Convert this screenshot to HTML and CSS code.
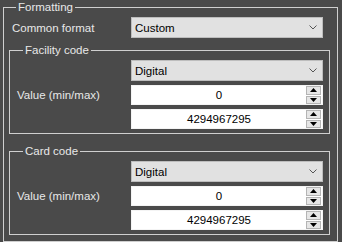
FILE: index.html
```html
<!DOCTYPE html>
<html lang="en">
<head>
    <meta charset="UTF-8">
    <title>Formatting</title>
    <link rel="stylesheet" href="styles.css">
</head>
<body>
    <fieldset class="group outer">
        <legend>Formatting</legend>
        <div class="format-row">
            <label class="caption">Common format</label>
            <div class="combo">
                <span>Custom</span>
                <svg class="chevron" width="8" height="5" viewBox="0 0 8 5"><path d="M0.5 0.5 L4 4 L7.5 0.5" fill="none" stroke="#555" stroke-width="1"/></svg>
            </div>
        </div>

        <fieldset class="group inner">
            <legend>Facility code</legend>
            <div class="field-grid">
                <span></span>
                <div class="combo">
                    <span>Digital</span>
                    <svg class="chevron" width="8" height="5" viewBox="0 0 8 5"><path d="M0.5 0.5 L4 4 L7.5 0.5" fill="none" stroke="#555" stroke-width="1"/></svg>
                </div>
                <label class="caption">Value (min/max)</label>
                <div class="spin">
                    <span class="spin-value">0</span>
                    <div class="spin-buttons">
                        <div class="spin-btn"><svg width="7" height="4" viewBox="0 0 7 4"><path d="M3.5 0 L7 4 L0 4 Z" fill="#000"/></svg></div>
                        <div class="spin-btn"><svg width="7" height="4" viewBox="0 0 7 4"><path d="M0 0 L7 0 L3.5 4 Z" fill="#000"/></svg></div>
                    </div>
                </div>
                <span></span>
                <div class="spin">
                    <span class="spin-value">4294967295</span>
                    <div class="spin-buttons">
                        <div class="spin-btn"><svg width="7" height="4" viewBox="0 0 7 4"><path d="M3.5 0 L7 4 L0 4 Z" fill="#000"/></svg></div>
                        <div class="spin-btn"><svg width="7" height="4" viewBox="0 0 7 4"><path d="M0 0 L7 0 L3.5 4 Z" fill="#000"/></svg></div>
                    </div>
                </div>
            </div>
        </fieldset>

        <fieldset class="group inner card">
            <legend>Card code</legend>
            <div class="field-grid">
                <span></span>
                <div class="combo">
                    <span>Digital</span>
                    <svg class="chevron" width="8" height="5" viewBox="0 0 8 5"><path d="M0.5 0.5 L4 4 L7.5 0.5" fill="none" stroke="#555" stroke-width="1"/></svg>
                </div>
                <label class="caption">Value (min/max)</label>
                <div class="spin">
                    <span class="spin-value">0</span>
                    <div class="spin-buttons">
                        <div class="spin-btn"><svg width="7" height="4" viewBox="0 0 7 4"><path d="M3.5 0 L7 4 L0 4 Z" fill="#000"/></svg></div>
                        <div class="spin-btn"><svg width="7" height="4" viewBox="0 0 7 4"><path d="M0 0 L7 0 L3.5 4 Z" fill="#000"/></svg></div>
                    </div>
                </div>
                <span></span>
                <div class="spin">
                    <span class="spin-value">4294967295</span>
                    <div class="spin-buttons">
                        <div class="spin-btn"><svg width="7" height="4" viewBox="0 0 7 4"><path d="M3.5 0 L7 4 L0 4 Z" fill="#000"/></svg></div>
                        <div class="spin-btn"><svg width="7" height="4" viewBox="0 0 7 4"><path d="M0 0 L7 0 L3.5 4 Z" fill="#000"/></svg></div>
                    </div>
                </div>
            </div>
        </fieldset>
    </fieldset>
</body>
</html>
```

FILE: styles.css
```css
:root {
    --panel-bg: #4a4a4a;
    --line-color: #cfcfcf;
    --text-color: #e8e8e8;
    --combo-bg: #e1e1e1;
    --combo-border: #bdbdbd;
}
html, body {
    margin: 0;
    padding: 0;
    background-color: var(--panel-bg);
}
body {
    width: 342px;
    height: 242px;
    overflow: hidden;
    font-family: "Liberation Sans", Arial, sans-serif;
    font-size: 11.5px;
    color: var(--text-color);
}
.group {
    border: 1px solid var(--line-color);
    margin: 0;
    min-width: 0;
}
.group legend {
    padding: 0 2px;
    line-height: 14px;
    height: 14px;
}
.outer {
    margin: 0 4px 0 3px;
    padding: 3px 7px 6px 5px;
}
.outer > legend {
    margin-left: 7px;
}
.format-row {
    display: grid;
    grid-template-columns: 1fr 192px;
    align-items: center;
    padding-left: 3px;
    margin-right: 7px;
}
.inner {
    margin: 5px 0 0 0;
    padding: 3px 6px 4px 7px;
}
.inner > legend {
    margin-left: 6px;
}
.inner.card {
    margin-top: 10px;
}
.field-grid {
    display: grid;
    grid-template-columns: 1fr 192px;
    grid-row-gap: 4px;
    align-items: center;
}
.caption {
    white-space: nowrap;
}
.combo {
    box-sizing: border-box;
    height: 21px;
    display: flex;
    align-items: center;
    justify-content: space-between;
    padding: 0 4px 0 3px;
    background-color: var(--combo-bg);
    border: 1px solid var(--combo-border);
    color: #000;
}
.chevron {
    margin-right: 1px;
}
.spin {
    box-sizing: border-box;
    height: 20px;
    display: flex;
    align-items: center;
    background-color: #fff;
    border: 1px solid #f4f4f4;
    color: #000;
}
.spin-value {
    flex: 1;
    text-align: center;
}
.spin-buttons {
    display: flex;
    flex-direction: column;
    gap: 1px;
    width: 15px;
    height: 18px;
    margin-right: 1px;
}
.spin-btn {
    flex: 1;
    display: flex;
    align-items: center;
    justify-content: center;
    background-color: #e6e6e6;
    border: 1px solid #b4b4b4;
}
```
